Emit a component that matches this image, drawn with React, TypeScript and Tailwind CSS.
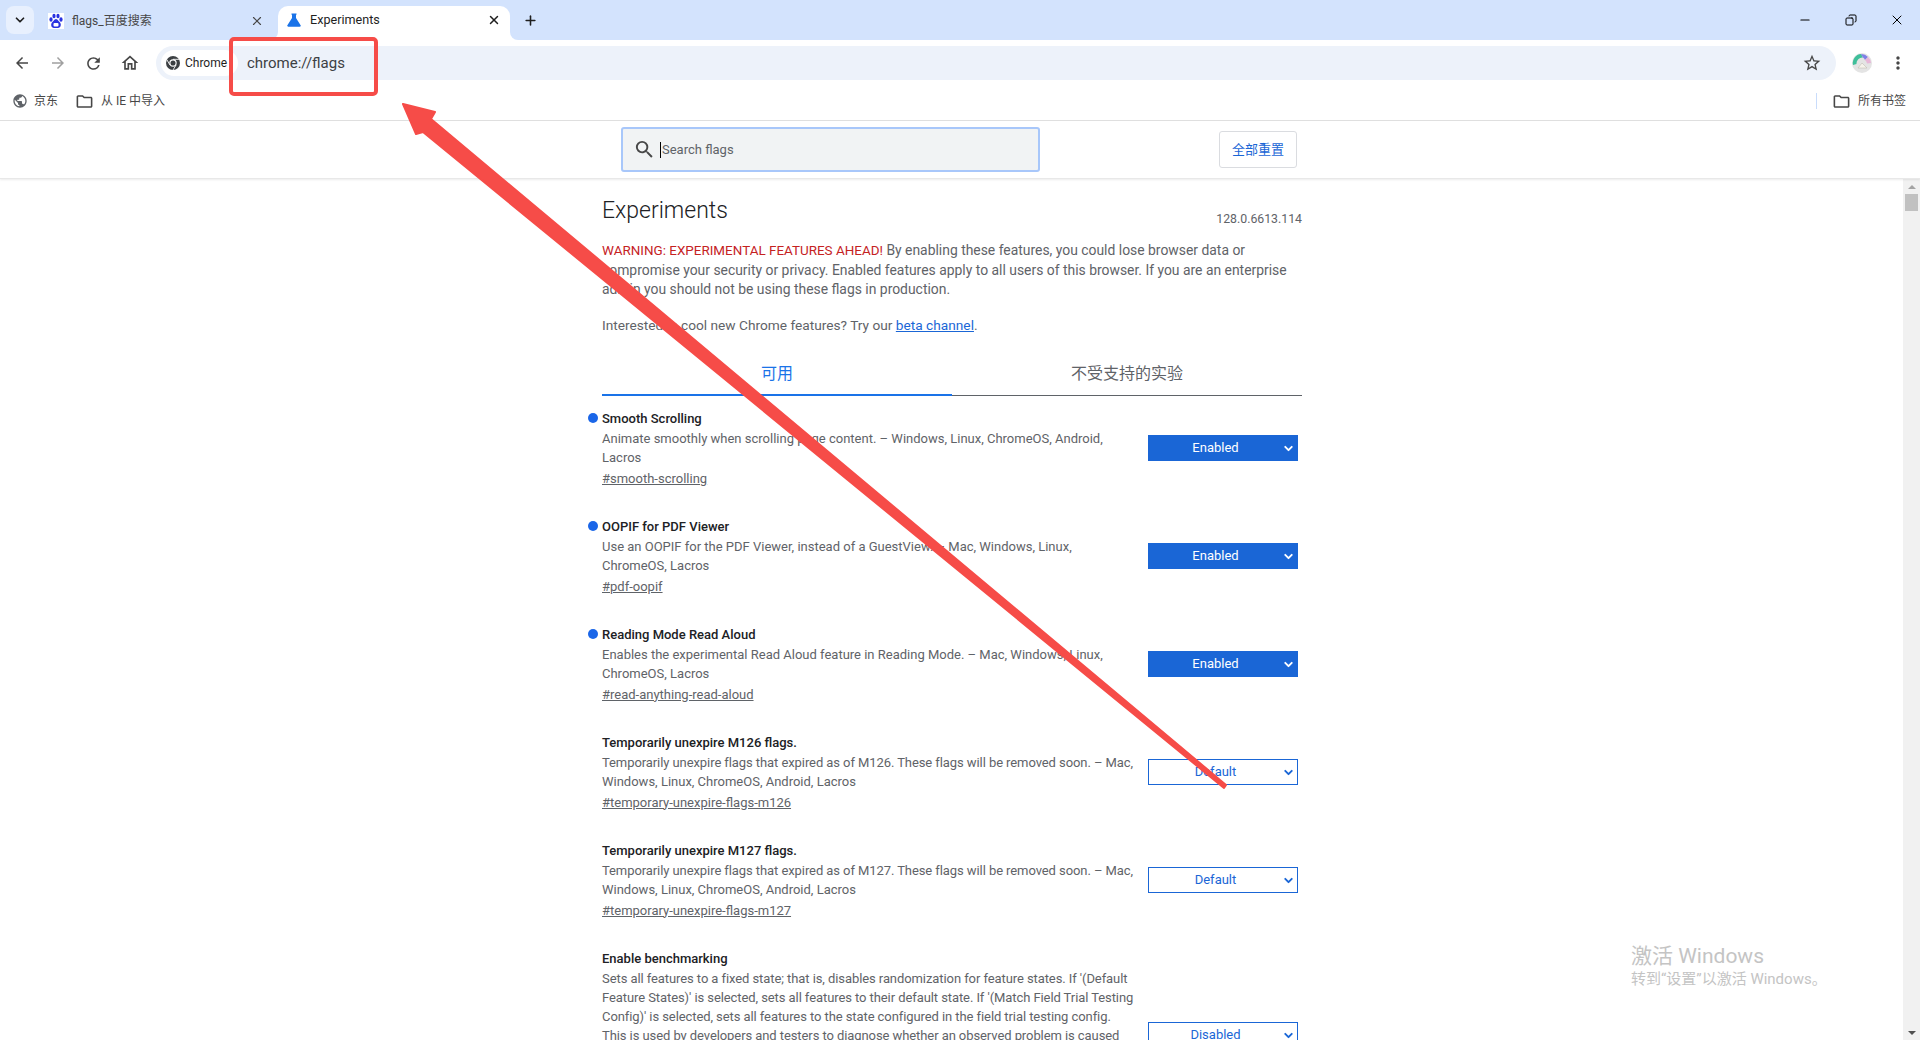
import React from 'react';
import { ChevronDown, Copy, Minus, Plus, X } from 'lucide-react';
import { MdArrowBack, MdArrowForward, MdMoreVert, MdOutlineFolder, MdOutlineHome, MdOutlineSearch, MdPublic, MdRefresh, MdStarBorder } from 'react-icons/md';

const flags = [
  {
    title: 'Smooth Scrolling',
    lines: ['Animate smoothly when scrolling page content. – Windows, Linux, ChromeOS, Android,', 'Lacros'],
    link: '#smooth-scrolling',
    value: 'Enabled',
    on: true,
  },
  {
    title: 'OOPIF for PDF Viewer',
    lines: ['Use an OOPIF for the PDF Viewer, instead of a GuestView. – Mac, Windows, Linux,', 'ChromeOS, Lacros'],
    link: '#pdf-oopif',
    value: 'Enabled',
    on: true,
  },
  {
    title: 'Reading Mode Read Aloud',
    lines: ['Enables the experimental Read Aloud feature in Reading Mode. – Mac, Windows, Linux,', 'ChromeOS, Lacros'],
    link: '#read-anything-read-aloud',
    value: 'Enabled',
    on: true,
  },
  {
    title: 'Temporarily unexpire M126 flags.',
    lines: ['Temporarily unexpire flags that expired as of M126. These flags will be removed soon. – Mac,', 'Windows, Linux, ChromeOS, Android, Lacros'],
    link: '#temporary-unexpire-flags-m126',
    value: 'Default',
    on: false,
  },
  {
    title: 'Temporarily unexpire M127 flags.',
    lines: ['Temporarily unexpire flags that expired as of M127. These flags will be removed soon. – Mac,', 'Windows, Linux, ChromeOS, Android, Lacros'],
    link: '#temporary-unexpire-flags-m127',
    value: 'Default',
    on: false,
  },
];

const benchmarking = [
  "Sets all features to a fixed state; that is, disables randomization for feature states. If '(Default",
  "Feature States)' is selected, sets all features to their default state. If '(Match Field Trial Testing",
  "Config)' is selected, sets all features to the state configured in the field trial testing config.",
  'This is used by developers and testers to diagnose whether an observed problem is caused',
];

const FlagSelect = ({ value, on }: { value: string; on: boolean }) => (
  <div className={`relative w-[150px] h-[26px] flex items-center justify-center pr-[15px] text-[13px] border border-[#1a66d6] ${on ? 'bg-[#1a66d6] text-white' : 'bg-white text-[#1a66d6]'}`}>
    {value}
    <ChevronDown size={13} strokeWidth={3.500} className="absolute right-[2px] top-[6px]" />
  </div>
);

const ChromeIcon = () => (
  <svg width="14" height="14" viewBox="0 0 16 16">
    <circle cx="8" cy="8" r="8" fill="#3c4043" />
    <circle cx="8" cy="8" r="4.2" fill="#fff" />
    <circle cx="8" cy="8" r="2.9" fill="#3c4043" />
    <path d="M8 3.8h7.2M4.4 10.200L1 4.200M11.600 10.200L8 16" stroke="#fff" strokeWidth="1" />
  </svg>
);

const BaiduIcon = () => (
  <svg width="16" height="16" viewBox="0 0 16 16">
    <rect width="16" height="16" fill="#fff" />
    <ellipse cx="3" cy="6.500" rx="1.600" ry="2.200" fill="#2932e1" />
    <ellipse cx="6" cy="3" rx="1.600" ry="2.200" fill="#2932e1" />
    <ellipse cx="10" cy="3" rx="1.600" ry="2.200" fill="#2932e1" />
    <ellipse cx="13" cy="6.500" rx="1.600" ry="2.200" fill="#2932e1" />
    <path d="M8 6c-2 0-2.500 2.500-4 3.500C2.500 11 3 15 6 15h4c3 0 3.500-4 2-5.500C10.500 8.500 10 6 8 6z" fill="#2932e1" />
    <rect x="5.500" y="10" width="5" height="3.500" rx="1" fill="#fff" />
  </svg>
);

const FlaskIcon = () => (
  <svg width="14" height="14" viewBox="0 0 14 14">
    <path d="M4.500 0.500h5v1.200H9V5l4.600 7.200c.5.800 0 1.500-.9 1.500H1.300c-.9 0-1.400-.7-.9-1.500L5 5V1.700h-.5z" fill="#1a73e8" />
  </svg>
);

const Avatar = () => (
  <svg width="20" height="20" viewBox="0 0 20 20">
    <circle cx="10" cy="10" r="10" fill="#e4e4e4" />
    <path d="M1 12A9 9 0 0 1 9 1l2 3.500A6 6 0 0 0 4.500 11z" fill="#3fbf9a" />
    <path d="M9 1a9 9 0 0 1 7 3l-3 3a6 6 0 0 0-2-2.500z" fill="#7f7fe6" />
    <path d="M16 4a9 9 0 0 1 3 6l-4 .5a6 6 0 0 0-2-3.500z" fill="#e7b6d8" />
    <path d="M6 15l4-5 5 5z" fill="#f6f3ec" stroke="#b9b4a8" strokeWidth=".5" />
  </svg>
);

const App = () => {
  return (
    <div className="relative w-[1920px] h-[1040px] overflow-hidden bg-white flex flex-col text-[#5f6368]" style={{ fontFamily: 'Roboto, "Noto Sans CJK SC", sans-serif' }}>
      {/* tab strip */}
      <div className="h-[40px] bg-[#d3e3fd] flex items-end shrink-0 pl-[6px]">
        <div className="w-[28px] h-[28px] mb-[6px] rounded-lg bg-[#e8f0fe] flex items-center justify-center text-[#1f1f1f]">
          <ChevronDown size={14} strokeWidth={3} />
        </div>
        <div className="w-[244px] h-[34px] pl-[14px] pr-[14px] pb-[5px] flex items-center text-[12px] text-[#474747]">
          <BaiduIcon />
          <span className="ml-[8px] flex-1">flags_百度搜索</span>
          <X size={14} strokeWidth={2} />
        </div>
        <div className="relative w-[232px] h-[34px] rounded-t-[10px] bg-white pl-[9px] pr-[9px] pb-[6px] flex items-center text-[12.6px] text-[#1f1f1f]">
          <FlaskIcon />
          <span className="ml-[9px] flex-1">Experiments</span>
          <X size={14} strokeWidth={2.500} />
          <div className="absolute left-[-8px] bottom-0 w-[8px] h-[8px] bg-white">
            <div className="w-full h-full bg-[#d3e3fd] rounded-br-[8px]" />
          </div>
          <div className="absolute right-[-8px] bottom-0 w-[8px] h-[8px] bg-white">
            <div className="w-full h-full bg-[#d3e3fd] rounded-bl-[8px]" />
          </div>
        </div>
        <div className="w-[40px] h-[34px] pb-[6px] flex items-center justify-center text-[#1f1f1f]">
          <Plus size={15} strokeWidth={2.500} />
        </div>
        <div className="flex-1" />
        <div className="flex h-[40px] items-center text-black">
          <div className="w-[46px] flex justify-center"><Minus size={14} strokeWidth={2} /></div>
          <div className="w-[46px] flex justify-center"><Copy size={12} strokeWidth={2} className="scale-x-[-1]" /></div>
          <div className="w-[46px] flex justify-center"><X size={16} strokeWidth={1.500} /></div>
        </div>
      </div>

      {/* toolbar */}
      <div className="h-[48px] shrink-0 bg-white rounded-t-[10px] flex items-center pb-[2px] pl-[13px] text-[#474747]">
        <MdArrowBack size={18} />
        <MdArrowForward size={18} className="ml-[18px] text-[#a0a0a0]" />
        <MdRefresh size={19} className="ml-[17px]" />
        <MdOutlineHome size={20} className="ml-[17px]" />
        <div className="ml-[16px] w-[1680px] h-[34px] rounded-full bg-[#edf2fa] flex items-center pl-[5px] pr-[14px]">
          <div className="w-[77px] h-[26px] rounded-full bg-white flex items-center pl-[5px] overflow-hidden text-[12px] text-[#1f1f1f] shrink-0">
            <ChromeIcon />
            <span className="ml-[5px]">Chrome</span>
          </div>
          <span className="ml-[9px] text-[15px] text-[#3c4043]">chrome://flags</span>
          <div className="flex-1" />
          <MdStarBorder size={20} />
        </div>
        <div className="ml-[16px]"><Avatar /></div>
        <MdMoreVert size={20} className="ml-[16px]" />
      </div>

      {/* bookmarks bar */}
      <div className="h-[33px] shrink-0 bg-white border-b border-[#e0e0e0] flex items-center pb-[6px] pl-[12px] pr-[14px] text-[12px] text-[#474747]">
        <MdPublic size={16} className="text-[#5f6368]" />
        <span className="ml-[6px]">京东</span>
        <MdOutlineFolder size={19} className="ml-[17px]" />
        <span className="ml-[7px]">从 IE 中导入</span>
        <div className="flex-1" />
        <div className="w-[1px] h-[16px] bg-[#c9dcfb]" />
        <MdOutlineFolder size={19} className="ml-[15px]" />
        <span className="ml-[7px]">所有书签</span>
      </div>

      {/* search header */}
      <div className="h-[58px] shrink-0 border-b border-[#e8e8e8] shadow-[0_1px_2px_rgba(0,0,0,0.08)] flex items-center pl-[621px] relative z-10 bg-white">
        <div className="w-[419px] h-[45px] rounded-[3px] border-2 border-[#a8c7fa] bg-[#f1f3f4] flex items-center pl-[10px] text-[13px]">
          <MdOutlineSearch size={23} className="text-[#474747]" />
          <span className="ml-[4px] border-l border-black pl-[1px] leading-[16px]">Search flags</span>
        </div>
        <div className="ml-[179px] w-[78px] h-[37px] rounded-[3px] border border-[#dadce0] flex items-center justify-center text-[13px] text-[#1a66d6]">
          全部重置
        </div>
      </div>

      {/* page */}
      <div className="flex-1 flex min-h-0">
        <div className="flex-1 min-w-0 pl-[602px] overflow-hidden">
          <div className="w-[700px]">
            <div className="flex justify-between items-end h-[48px] pt-[12px]">
              <h1 className="text-[23px] leading-[32px] text-[#202124] font-light mb-[0px]">Experiments</h1>
              <span className="text-[12.3px] text-[#5f6368] mb-[-1px]">128.0.6613.114</span>
            </div>
            <p className="mt-[14px] text-[13.9px] leading-[19.5px] whitespace-nowrap">
              <span className="text-[#c5221f] text-[13.45px]">WARNING: EXPERIMENTAL FEATURES AHEAD!</span> By enabling these features, you could lose browser data or<br />
              compromise your security or privacy. Enabled features apply to all users of this browser. If you are an enterprise<br />
              admin you should not be using these flags in production.
            </p>
            <p className="mt-[16px] text-[13.7px] leading-[19.5px]">
              Interested in cool new Chrome features? Try our <span className="text-[#1a66d6] underline">beta channel</span>.
            </p>
            <div className="mt-[24px] flex h-[37px] text-[16px] border-b border-[#5f6368]">
              <div className="w-[350px] -mb-[1px] border-b-2 border-[#1a73e8] text-[#1a73e8] flex justify-center pt-[3px]">可用</div>
              <div className="flex-1 flex justify-center pt-[3px]">不受支持的实验</div>
            </div>
            <div className="mt-[11px]">
              {flags.map((flag) => (
                <div key={flag.link} className="relative h-[108px] flex">
                  {flag.on && <div className="absolute left-[-14px] top-[6px] w-[10px] h-[10px] rounded-full bg-[#1a66e8]" />}
                  <div className="w-[546px] pt-[0.5px] text-[13px] whitespace-nowrap">
                    <div className="font-medium text-[#202124] leading-[21px]">{flag.title}</div>
                    {flag.lines.map((line) => (
                      <div key={line} className={`leading-[19.5px] ${line.includes('Temporarily') ? 'tracking-[-0.08px]' : ''}`}>{line}</div>
                    ))}
                    <div className="underline leading-[22px]">{flag.link}</div>
                  </div>
                  <div className="pt-[28px]">
                    <FlagSelect value={flag.value} on={flag.on} />
                  </div>
                </div>
              ))}
              <div className="relative flex">
                <div className="w-[546px] pt-[0.5px] text-[13px] whitespace-nowrap">
                  <div className="font-medium text-[#202124] leading-[21px]">Enable benchmarking</div>
                  {benchmarking.map((line) => (
                    <div key={line} className="leading-[19px] tracking-[-0.08px]">{line}</div>
                  ))}
                </div>
                <div className="pt-[75px]">
                  <FlagSelect value="Disabled" on={false} />
                </div>
              </div>
            </div>
          </div>
        </div>

        {/* scrollbar */}
        <div className="w-[17px] shrink-0 bg-[#f1f1f1] flex flex-col items-center relative">
          <div className="mt-[6px] w-0 h-0 border-x-[4px] border-x-transparent border-b-[4px] border-b-[#a3a3a3]" />
          <div className="mt-[5px] w-[13px] h-[17px] bg-[#c1c1c1]" />
          <div className="mt-auto mb-[5px] w-0 h-0 border-x-[4px] border-x-transparent border-t-[4px] border-t-[#505050]" />
        </div>
      </div>

      {/* activation watermark */}
      <div className="absolute left-[1631px] top-[942px] text-[#c4c4c4] pointer-events-none">
        <div className="text-[21px] leading-[28px]">激活 Windows</div>
        <div className="text-[15px] leading-[18px]">转到“设置”以激活 Windows。</div>
      </div>

      {/* annotation: red box and arrow */}
      <div className="absolute z-20 left-[229px] top-[37px] w-[149px] h-[59px] rounded-[5px] border-[4px] border-[#f64c48]" />
      <svg className="absolute z-20 left-0 top-0 pointer-events-none" width="1920" height="1040">
        <polygon points="403,104 435,112 431,119 1226,785 1224,788 423,132 416,134" fill="#f64c48" stroke="#f64c48" strokeWidth="2" strokeLinejoin="round" />
      </svg>
    </div>
  );
};

export default App;
